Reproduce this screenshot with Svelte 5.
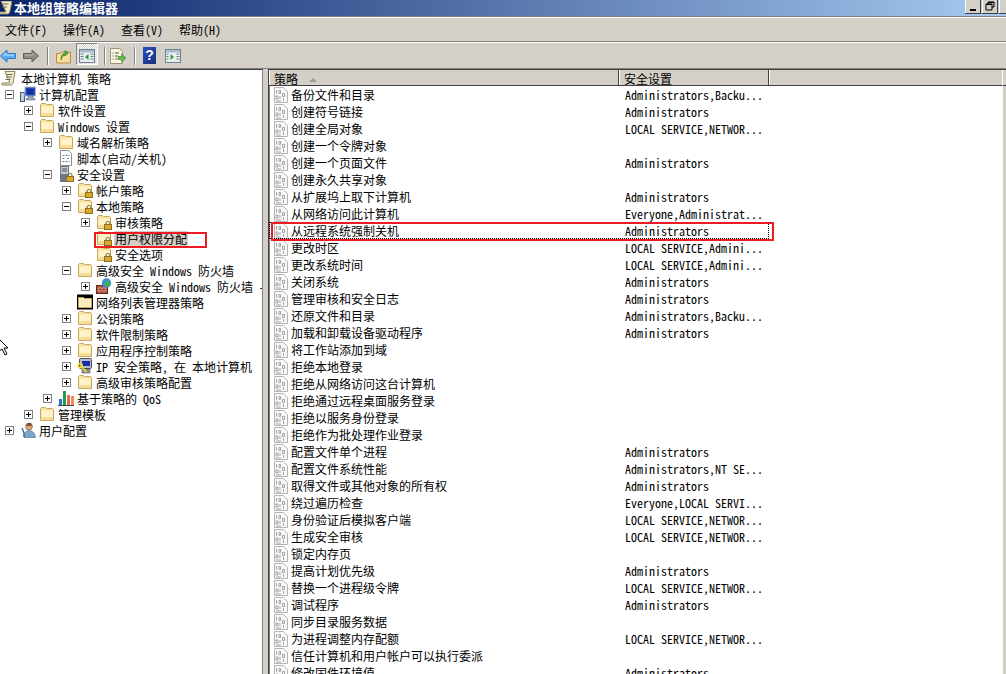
<script lang="ts">
	type Node = { depth: number; exp?: '+' | '-'; icon: string; label: string; selected?: boolean };

	const menus = ['文件(F)', '操作(A)', '查看(V)', '帮助(H)'];

	const tree: Node[] = [
		{ depth: 0, icon: 'scroll', label: '本地计算机 策略' },
		{ depth: 1, exp: '-', icon: 'computer', label: '计算机配置' },
		{ depth: 2, exp: '+', icon: 'folder', label: '软件设置' },
		{ depth: 2, exp: '-', icon: 'folder', label: 'Windows 设置' },
		{ depth: 3, exp: '+', icon: 'folder', label: '域名解析策略' },
		{ depth: 3, icon: 'script', label: '脚本(启动/关机)' },
		{ depth: 3, exp: '-', icon: 'server', label: '安全设置' },
		{ depth: 4, exp: '+', icon: 'lockfolder', label: '帐户策略' },
		{ depth: 4, exp: '-', icon: 'lockfolder', label: '本地策略' },
		{ depth: 5, exp: '+', icon: 'lockfolder', label: '审核策略' },
		{ depth: 5, icon: 'lockfolder', label: '用户权限分配', selected: true },
		{ depth: 5, icon: 'lockfolder', label: '安全选项' },
		{ depth: 4, exp: '-', icon: 'folder', label: '高级安全 Windows 防火墙' },
		{ depth: 5, exp: '+', icon: 'firewall', label: '高级安全 Windows 防火墙 -' },
		{ depth: 4, icon: 'netfolder', label: '网络列表管理器策略' },
		{ depth: 4, exp: '+', icon: 'folder', label: '公钥策略' },
		{ depth: 4, exp: '+', icon: 'folder', label: '软件限制策略' },
		{ depth: 4, exp: '+', icon: 'folder', label: '应用程序控制策略' },
		{ depth: 4, exp: '+', icon: 'ipsec', label: 'IP 安全策略， 在 本地计算机' },
		{ depth: 4, exp: '+', icon: 'folder', label: '高级审核策略配置' },
		{ depth: 3, exp: '+', icon: 'qos', label: '基于策略的 QoS' },
		{ depth: 2, exp: '+', icon: 'folder', label: '管理模板' },
		{ depth: 1, exp: '+', icon: 'user', label: '用户配置' }
	];

	const admins = 'Administrators';
	const localNet = 'LOCAL SERVICE,NETWOR...';
	const localAdm = 'LOCAL SERVICE,Admini...';

	const policies: [string, string][] = [
		['备份文件和目录', 'Administrators,Backu...'],
		['创建符号链接', admins],
		['创建全局对象', localNet],
		['创建一个令牌对象', ''],
		['创建一个页面文件', admins],
		['创建永久共享对象', ''],
		['从扩展坞上取下计算机', admins],
		['从网络访问此计算机', 'Everyone,Administrat...'],
		['从远程系统强制关机', admins],
		['更改时区', localAdm],
		['更改系统时间', localAdm],
		['关闭系统', admins],
		['管理审核和安全日志', admins],
		['还原文件和目录', 'Administrators,Backu...'],
		['加载和卸载设备驱动程序', admins],
		['将工作站添加到域', ''],
		['拒绝本地登录', ''],
		['拒绝从网络访问这台计算机', ''],
		['拒绝通过远程桌面服务登录', ''],
		['拒绝以服务身份登录', ''],
		['拒绝作为批处理作业登录', ''],
		['配置文件单个进程', admins],
		['配置文件系统性能', 'Administrators,NT SE...'],
		['取得文件或其他对象的所有权', admins],
		['绕过遍历检查', 'Everyone,LOCAL SERVI...'],
		['身份验证后模拟客户端', localNet],
		['生成安全审核', localNet],
		['锁定内存页', ''],
		['提高计划优先级', admins],
		['替换一个进程级令牌', localNet],
		['调试程序', admins],
		['同步目录服务数据', ''],
		['为进程调整内存配额', localNet],
		['信任计算机和用户帐户可以执行委派', ''],
		['修改固件环境值', admins]
	];
</script>

{#snippet folderShape()}
	<path d="M1.5 14.5V2.500l1-1h4l1 1h6l1 1v11z" fill="#f8e2a0" stroke="#c8a860" />
	<path d="M2.500 4.500h11.500v9H2.500z" fill="#fdf2c8" />
	<path d="M2.500 11h11.500v3H2.500z" fill="#f5dc98" />
{/snippet}

{#snippet lockShape()}
	<path d="M10 11V9.500a2 2 0 0 1 4 0V11" fill="none" stroke="#8a7440" stroke-width="1.200" />
	<rect x="8.500" y="10.500" width="7" height="5" fill="#d8a92e" stroke="#8c6d1c" />
{/snippet}

{#snippet treeIcon(name: string)}
	<svg class="ico" viewBox="0 0 16 16" width="16" height="16">
		{#if name === 'folder'}
			{@render folderShape()}
		{:else if name === 'lockfolder'}
			{@render folderShape()}
			{@render lockShape()}
		{:else if name === 'netfolder'}
			<rect x="0" y="0.500" width="16" height="15" fill="#000" />
			<path d="M1.500 13.500V3.500h5l1 1h7v9z" fill="#fbeebc" stroke="#c8a860" />
		{:else if name === 'scroll'}
			<path d="M4 1.500h10l-2 11.500c-.2 1.200-1 2-2 2H2c-1 0-1.500-1-1-2h8z" fill="#f6eec8" stroke="#8c8060" />
			<path d="M5.500 4.500h6M5 7h6M4.500 9.500h5" stroke="#6f6a58" />
		{:else if name === 'computer'}
			<rect x="0.500" y="6.500" width="4" height="9" fill="#c8ccd4" stroke="#3e5a80" />
			<rect x="5" y="1" width="10.500" height="9" fill="#2440c0" stroke="#b4bcc8" />
			<path d="M7 3h6v5H7z" fill="#1030a0" />
			<path d="M8 10h5v2.500H15v1.500H6v-1.500h2z" fill="#9aa8bc" stroke="#506078" stroke-width=".5" />
		{:else if name === 'script'}
			<path d="M2.500.5h8l3 3v12h-11z" fill="#fff" stroke="#8c8c8c" />
			<path d="M4.500 5.500h7M4.500 8.500h2.500M9 8.500h2.500M4.500 11.500h7" stroke="#6a7c90" stroke-dasharray="2 1" />
		{:else if name === 'server'}
			<rect x="2.500" y="0.500" width="8" height="15" fill="#c4c8cc" stroke="#707880" />
			<path d="M4 3h5M4 5h5" stroke="#4e5660" />
			<path d="M3 8h7v7H3z" fill="#6c7884" />
			{@render lockShape()}
		{:else if name === 'firewall'}
			<rect x="0.500" y="7.500" width="11" height="8" fill="#a04028" stroke="#6a2a1c" />
			<path d="M1 10h10M1 13h10M4 8v2M8 8v2M2.500 10v3M6 10v3M9.500 10v3M4 13v2M8 13v2" stroke="#e0b0a0" stroke-width=".7" />
			<circle cx="10.500" cy="5" r="4.700" fill="#3a8ce0" />
			<path d="M8 2.500c2-1 3 0 2.500 1.500-1 1.200-3 1-3 2.500 1 1 2 .5 2.500 2 2-1 4-1 4.500-3-1-.5-1.500-1-1-2.500" fill="#49b24a" />
		{:else if name === 'ipsec'}
			<rect x="2.500" y="0.500" width="12" height="10" rx="1" fill="#b8bcc4" stroke="#4a4e58" />
			<rect x="5" y="3" width="8" height="5" fill="#1c2cb0" />
			<rect x="5" y="11" width="8" height="4" fill="#8c9098" stroke="#4a4e58" stroke-width=".5" />
			<circle cx="3.200" cy="7.500" r="2" fill="none" stroke="#f4dc20" stroke-width="1.500" />
			<path d="M4.500 9l5 5M7 13l1.500-1.500" stroke="#f4dc20" stroke-width="1.500" />
		{:else if name === 'qos'}
			<path d="M1 9h3v6H1z" fill="#2878d0" />
			<path d="M5 1h3v14H5z" fill="#1e9c50" />
			<path d="M9 5h3v10H9z" fill="#e06a50" />
			<path d="M13 6h3v9h-3z" fill="#f08c60" />
			<path d="M0 15.500h16" stroke="#444" />
		{:else if name === 'user'}
			<circle cx="9" cy="4.500" r="3.500" fill="#d8a878" stroke="#7a5a3c" stroke-width=".6" />
			<path d="M8 1h3l1 3H6z" fill="#7a5030" />
			<path d="M4 15.500c0-5 2-7 5-7s6 2 6.500 7z" fill="#7ea4cc" stroke="#50708c" stroke-width=".6" />
			<path d="M2 6l2 5v4" stroke="#3c6a90" stroke-width="1.400" fill="none" />
		{/if}
	</svg>
{/snippet}

{#snippet policyIcon()}
	<svg class="pico" viewBox="0 0 14 16" width="14" height="16">
		<path d="M.5 .5h9l4 4v11H.5z" fill="#f8f8f8" stroke="#b4b4b4" />
		<path d="M2.500 3v3.500M5 3.500h1.500v3H5zM2 9h2v3H2zM6 9v3M8.500 6.500h2v3h-2zM9.500 11v3M2 14h5" fill="none" stroke="#a4a4a4" />
	</svg>
{/snippet}

<div class="window">
	<header class="titlebar">
		<svg class="title-ico" viewBox="0 0 14 14" width="14" height="14">
			<path d="M2 0h11l-2 10c-.2 1.500-1 3-2 3H0c-1 0-1-2 0-2h7z" fill="#f6eec8" stroke="#8c8060" />
			<path d="M3.500 3h6M3 6h5" stroke="#6f6a58" />
		</svg>
		<span class="title">本地组策略编辑器</span>
		<div class="caption">
			<button class="cap" aria-label="最小化"><i class="min"></i></button>
			<button class="cap" aria-label="还原">
				<svg viewBox="0 0 10 10" width="10" height="10">
					<path d="M3 3V1h6v5H7M1 3h6v6H1zM3 1.500h6M1 3.500h6" fill="none" stroke="#000" />
				</svg>
			</button>
			<button class="cap close" aria-label="关闭"></button>
		</div>
	</header>

	<nav class="menubar">
		{#each menus as m}<span class="menu">{m}</span>{/each}
	</nav>

	<div class="toolbar">
		<svg class="tb back" viewBox="0 0 16 14" width="16" height="14">
			<path d="M.5 7L7 1v3.500h8.500v5H7V13z" fill="#5aaef0" stroke="#2a78c4" />
			<path d="M3 7l3-3v2h8" fill="none" stroke="#cbe8ff" />
		</svg>
		<svg class="tb fwd" viewBox="0 0 16 14" width="16" height="14">
			<path d="M15.500 7L9 1v3.500H.5v5H9V13z" fill="#8c8c8c" stroke="#5e5e5e" />
			<path d="M2 6h8V4" fill="none" stroke="#b8b8b8" />
		</svg>
		<i class="sep s1"></i>
		<svg class="tb up" viewBox="0 0 15 16" width="15" height="16">
			<path d="M.5 15V5.500h4L6 4h8.500v11z" fill="#f8dc98" stroke="#b08c48" />
			<path d="M5 12c0-4 1-6 4-7V2.500L12.500 5 9 8V7C7 7.500 6 9 5 12z" fill="#50a840" stroke="#2c7a28" stroke-width=".6" />
		</svg>
		<div class="pressed">
			<svg viewBox="0 0 16 14" width="16" height="14">
				<rect x=".5" y=".5" width="15" height="13" fill="#e8eef0" stroke="#70808c" />
				<path d="M1 1h14v2.500H1z" fill="#a8bccc" />
				<path d="M1.500 5h3M1.500 7.500h3M1.500 10h3M11.500 5h3M11.500 7.500h3M11.500 10h3" stroke="#6c7c88" />
				<path d="M9.500 5v6L6 8z" fill="#2c9c44" />
			</svg>
		</div>
		<i class="sep s2"></i>
		<svg class="tb export" viewBox="0 0 16 16" width="16" height="16">
			<path d="M.5.500h9l3 3V15.500H.5z" fill="#fbf6e0" stroke="#9c9478" />
			<path d="M2.500 5h1M5 5h4M2.500 8h1M5 8h3M2.500 11h1M5 11h2" stroke="#555" />
			<path d="M8 8.500h3.500V6l4.500 4-4.500 4v-2.500H8z" fill="#60b848" stroke="#3c8c34" stroke-width=".6" />
		</svg>
		<i class="sep s3"></i>
		<div class="help">?</div>
		<svg class="tb panel" viewBox="0 0 16 14" width="16" height="14">
			<rect x=".5" y=".5" width="15" height="13" fill="#e8eef0" stroke="#70808c" />
			<path d="M1 1h14v2.500H1z" fill="#a8bccc" />
			<path d="M11.500 5h3M11.500 7.500h3M11.500 10h3M1.500 5h2M1.500 7.500h2M1.500 10h2" stroke="#6c7c88" />
			<path d="M5.500 5v6L9 8z" fill="#2c9c44" />
		</svg>
	</div>

	<main class="panes">
		<section class="tree">
			{#each tree as n}
				<div class="tnode" style="padding-left: {Math.max(n.depth - 1, 0) * 19}px">
					{#if n.depth > 0}
						<span class="expcell">
							{#if n.exp}
								<span class="exp">
									<i class="h"></i>
									{#if n.exp === '+'}<i class="v"></i>{/if}
								</span>
							{/if}
						</span>
					{/if}
					{@render treeIcon(n.icon)}
					<span class="tlabel" class:root={n.depth === 0} class:selected={n.selected}>{n.label}</span>
				</div>
			{/each}
		</section>

		<div class="splitter"></div>

		<section class="list">
			<div class="thead">
				<div class="th c1">策略 <span class="sort"></span></div>
				<div class="th c2">安全设置</div>
				<div class="th c3"></div>
			</div>
			<div class="tbody">
				{#each policies as [name, setting], i}
					<div class="tr" class:focus={i === 8}>
						<div class="td-name">
							{@render policyIcon()}
							<span>{name}</span>
						</div>
						<div class="td-set">{setting}</div>
					</div>
				{/each}
			</div>
		</section>

		<div class="scroll">
			<div class="sbtn"></div>
			<div class="strack"></div>
		</div>
	</main>

	<div class="mark mark-tree"></div>
	<div class="mark mark-row"></div>
	<svg class="cursor" viewBox="0 0 10 20" width="10" height="20">
		<path d="M-2 0L8 10H4l3 6-2 1-3-6-4 3z" fill="#fff" stroke="#000" />
	</svg>
</div>

<style>
	:global(body) {
		margin: 0;
		background: #d4d0c8;
	}

	.window {
		position: relative;
		width: 1006px;
		height: 674px;
		overflow: hidden;
		display: flex;
		flex-direction: column;
		background: #d4d0c8;
		color: #000;
		font: 12px/16px 'Noto Sans CJK SC', 'Liberation Mono', monospace;
		font-feature-settings: 'hwid';
	}

	.titlebar {
		flex: none;
		height: 16px;
		display: flex;
		align-items: center;
		background: linear-gradient(90deg, #0a246a, #a6caf0);
		border-bottom: 1px solid #808080;
	}

	.title-ico {
		margin: 0 1px 0 -1px;
	}

	.title {
		color: #fff;
		font-size: 13px;
		font-weight: 700;
	}

	.caption {
		margin-left: auto;
		margin-top: -3px;
		display: flex;
		gap: 0;
		height: 14px;
		margin-right: -10px;
	}

	.cap {
		width: 16px;
		height: 14px;
		padding: 0;
		margin-right: 1px;
		display: flex;
		align-items: center;
		justify-content: center;
		background: #d4d0c8;
		border: 0;
		border-right: 1px solid #404040;
		border-bottom: 1px solid #404040;
		box-shadow: inset 1px 0 #fff;
	}

	.min {
		display: block;
		width: 6px;
		height: 2px;
		margin-top: 7px;
		background: #000;
	}

	.menubar {
		flex: none;
		height: 24px;
		box-sizing: border-box;
		height: 25px;
		display: flex;
		align-items: center;
		border-top: 1px solid #fff;
		border-bottom: 1px solid #808080;
		padding-left: 5px;
	}

	.menu {
		width: 58px;
	}

	.toolbar {
		flex: none;
		height: 26px;
		display: flex;
		align-items: center;
		border-top: 1px solid #fff;
		box-sizing: border-box;
	}

	.tb {
		flex: none;
	}

	.back {
		margin-left: 0;
	}

	.fwd {
		margin-left: 7px;
	}

	.sep {
		flex: none;
		width: 1px;
		height: 18px;
		background: #808080;
		box-shadow: 1px 0 #fff;
	}

	.s1 {
		margin-left: 8px;
	}

	.up {
		margin-left: 8px;
	}

	.pressed {
		flex: none;
		width: 22px;
		height: 22px;
		margin-left: 5px;
		margin-top: -3px;
		padding-top: 3px;
		box-sizing: border-box;
		display: flex;
		align-items: center;
		justify-content: center;
		border: 1px solid;
		border-color: #808080 #fff #fff #808080;
		background: repeating-conic-gradient(#fff 0 25%, #d4d0c8 0 50%) 0 0 / 2px 2px;
	}

	.s2 {
		margin-left: 6px;
	}

	.export {
		margin-left: 5px;
	}

	.s3 {
		margin-left: 8px;
	}

	.help {
		flex: none;
		width: 13px;
		height: 17px;
		margin-left: 8px;
		background: linear-gradient(135deg, #2c50c0, #14307c);
		color: #fff;
		font: 700 14px/17px 'Liberation Sans', sans-serif;
		text-align: center;
	}

	.panel {
		margin-left: 9px;
	}

	.panes {
		flex: 1;
		min-height: 0;
		display: flex;
		border-top: 1px solid #808080;
	}

	.tree {
		flex: none;
		background: #fff;
		border-top: 1px solid #404040;
		border-right: 1px solid #808080;
		box-sizing: border-box;
		width: 263px;
		overflow: hidden;
	}

	.tnode {
		height: 16px;
		display: flex;
		align-items: center;
		white-space: nowrap;
	}

	.expcell {
		flex: none;
		width: 19px;
		display: flex;
		justify-content: center;
	}

	.exp {
		position: relative;
		width: 9px;
		height: 9px;
		box-sizing: border-box;
		border: 1px solid #808080;
		background: #fff;
	}

	.exp .h {
		position: absolute;
		left: 1px;
		top: 3px;
		width: 5px;
		height: 1px;
		background: #000;
	}

	.exp .v {
		position: absolute;
		left: 3px;
		top: 1px;
		width: 1px;
		height: 5px;
		background: #000;
	}

	.ico {
		flex: none;
		margin: 0 3px 0 1px;
	}

	.tlabel {
		padding: 0 1px;
		margin-left: -1px;
		line-height: 15px;
	}

	.tlabel.root {
		margin-left: 0;
	}

	.tlabel.selected {
		background: #d4d0c8;
	}

	.splitter {
		flex: none;
		width: 5px;
	}

	.list {
		flex: 1;
		min-width: 0;
		display: flex;
		flex-direction: column;
		background: #fff;
		border-top: 1px solid #404040;
		border-left: 1px solid #404040;
		box-shadow: inset 1px 0 #808080;
	}

	.thead {
		flex: none;
		height: 16px;
		box-sizing: border-box;
		display: flex;
		background: #d4d0c8;
		border-bottom: 1px solid #404040;
	}

	.th {
		box-sizing: border-box;
		padding: 1px 0 0 5px;
		line-height: 15px;
		box-shadow: inset 1px 0 #fff;
		border-right: 1px solid #404040;
	}

	.c1 {
		width: 350px;
	}

	.c2 {
		width: 150px;
	}

	.c3 {
		flex: 1;
		border-right: 0;
	}

	.sort {
		display: inline-block;
		width: 0;
		height: 0;
		margin-left: 5px;
		vertical-align: 2px;
		border: 4px solid transparent;
		border-top: 0;
		border-bottom: 4px solid #9c9a94;
	}

	.tbody {
		flex: 1;
		min-height: 0;
		overflow: hidden;
	}

	.tr {
		height: 17px;
		display: flex;
		align-items: center;
		box-sizing: border-box;
		white-space: nowrap;
	}

	.td-name {
		width: 350px;
		flex: none;
		display: flex;
		align-items: center;
		padding-left: 5px;
		box-sizing: border-box;
	}

	.pico {
		flex: none;
		margin: 1px 3px 0 0;
	}

	.td-set {
		padding-left: 6px;
		font-size: 12px;
	}

	.tr.focus {
		outline: 1px dotted #000;
		outline-offset: -1px;
		width: 500px;
	}

	.scroll {
		flex: none;
		width: 4px;
		display: flex;
		flex-direction: column;
		border-top: 1px solid #404040;
	}

	.sbtn {
		height: 15px;
		border-bottom: 1px solid #404040;
		border-left: 1px solid #fff;
	}

	.strack {
		flex: 1;
		border-left: 1px solid #fff;
	}

	.mark {
		position: absolute;
		box-sizing: border-box;
		border: 2px solid #ed1c24;
		pointer-events: none;
	}

	.mark-tree {
		left: 94px;
		top: 232px;
		width: 113px;
		height: 16px;
	}

	.mark-row {
		left: 271px;
		top: 222px;
		width: 503px;
		height: 19px;
	}

	.cursor {
		position: absolute;
		left: 0;
		top: 338px;
	}
</style>
